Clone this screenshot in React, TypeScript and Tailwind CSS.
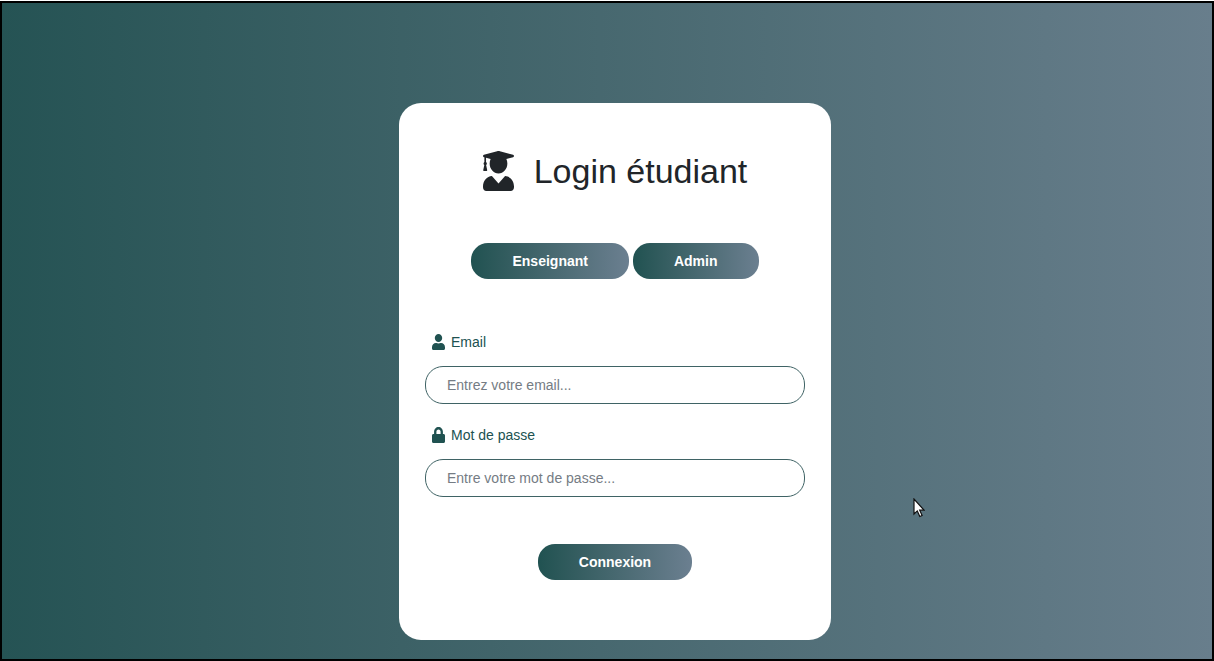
import { FaLock, FaUser, FaUserGraduate } from "react-icons/fa";
import type { ComponentProps } from "react";

const pill =
  "h-9 rounded-[17px] bg-linear-to-r from-[#205251] to-[#6b7f90] px-[41px] text-sm font-bold text-white";

type FieldProps = ComponentProps<"input"> & { label: string; icon: typeof FaUser };

function Field({ label, icon: Icon, id, ...input }: FieldProps) {
  return (
    <div>
      <label htmlFor={id} className="flex h-6 items-center gap-1.5 pl-[7px] text-sm text-[#205251]">
        <Icon className="h-4 w-[13px]" preserveAspectRatio="none" />
        {label}
      </label>
      <input
        id={id}
        className="mt-3 block h-[38px] w-full rounded-[18px] border border-[#3f6365] bg-white px-[21px] text-sm text-[#212529] outline-none placeholder:text-[#757c84]"
        {...input}
      />
    </div>
  );
}

export default function App() {
  return (
    <div className="min-h-screen bg-white pt-px font-['Liberation_Sans',sans-serif]">
      <main className="relative flex min-h-[calc(100vh-1px)] items-start justify-center border-2 border-black bg-linear-to-r from-[#255354] to-[#687e8c] pt-[100px] pb-[18px] pl-4">
        <form
          onSubmit={(e) => e.preventDefault()}
          className="w-full max-w-[432px] rounded-[22px] bg-white px-[26px] pt-11 pb-[60px]"
        >
          <h1 className="flex h-12 items-center justify-center gap-5 text-[34px] leading-[48px] text-[#212529]">
            <FaUserGraduate className="h-10 w-[31px]" preserveAspectRatio="none" />
            Login étudiant
          </h1>
          <div className="mt-12 flex justify-center gap-1">
            <button type="button" className={pill}>Enseignant</button>
            <button type="button" className={pill}>Admin</button>
          </div>
          <div className="mt-[51px] flex flex-col gap-[19px]">
            <Field id="email" type="email" label="Email" icon={FaUser} placeholder="Entrez votre email..." />
            <Field id="password" type="password" label="Mot de passe" icon={FaLock} placeholder="Entre votre mot de passe..." />
          </div>
          <div className="mt-[47px] flex justify-center">
            <button type="submit" className={pill}>Connexion</button>
          </div>
        </form>
        <svg aria-hidden="true" viewBox="0 0 12 20" className="absolute top-[495px] left-[911px] h-5 w-3">
          <path d="M1 1v15l3.3-3.1 2.5 5.6 2.3-1-2.4-5.3h4.4z" fill="#fff" stroke="#111" strokeWidth="1.2" />
        </svg>
      </main>
    </div>
  );
}
